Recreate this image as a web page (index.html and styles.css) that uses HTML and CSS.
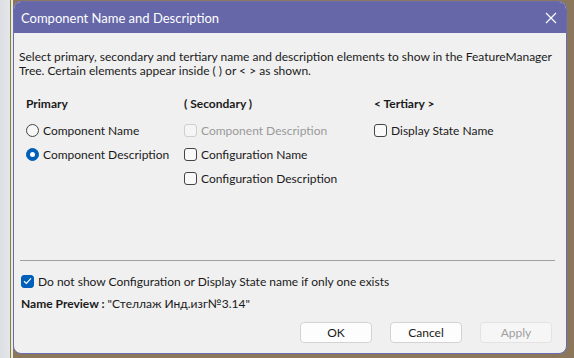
FILE: index.html
```html
<!DOCTYPE html>
<html lang="en">
<head>
  <meta charset="UTF-8">
  <title>Component Name and Description</title>
  <link rel="stylesheet" href="styles.css">
</head>
<body>
  <div class="dialog">
    <div class="titlebar">
      <span class="title">Component Name and Description</span>
      <svg class="close" width="12" height="12" viewBox="0 0 12 12">
        <path d="M1 1 L11 11 M11 1 L1 11" stroke="#fff" stroke-width="1.2" fill="none"/>
      </svg>
    </div>

    <div class="content">
      <p class="intro">Select primary, secondary and tertiary name and description elements to show in the FeatureManager Tree. Certain elements appear inside ( ) or &lt; &gt; as shown.</p>

      <div class="columns">
        <div class="col col-primary">
          <div class="col-head">Primary</div>
          <label class="opt"><span class="radio"></span>Component Name</label>
          <label class="opt"><span class="radio on"></span>Component Description</label>
        </div>
        <div class="col col-secondary">
          <div class="col-head">( Secondary )</div>
          <label class="opt disabled"><span class="check"></span>Component Description</label>
          <label class="opt"><span class="check"></span>Configuration Name</label>
          <label class="opt"><span class="check"></span>Configuration Description</label>
        </div>
        <div class="col col-tertiary">
          <div class="col-head">&lt; Tertiary &gt;</div>
          <label class="opt"><span class="check"></span>Display State Name</label>
        </div>
      </div>

      <div class="separator"></div>

      <label class="opt single"><span class="check on">
        <svg width="9" height="8" viewBox="0 0 9 8"><path d="M1 4.2 L3.4 6.4 L8 1.4" stroke="#fff" stroke-width="1.2" fill="none"/></svg>
      </span>Do not show Configuration or Display State name if only one exists</label>

      <div class="preview"><b>Name Preview :</b> "Стеллаж Инд.изг№3.14"</div>

      <div class="buttons">
        <button class="btn">OK</button>
        <button class="btn">Cancel</button>
        <button class="btn" disabled>Apply</button>
      </div>
    </div>
  </div>
</body>
</html>
```

FILE: styles.css
```css
body {
  margin: 0;
  height: 358px;
  overflow: hidden;
  font-family: 'Lato', 'Noto Sans', sans-serif;
  font-size: 12px;
  color: #1a1a1a;
  background: linear-gradient(to right, #dcdfe3 0, #e4e6e9 10px, #86862e 10px, #86862e 11px, #e8e8e8 11px, #e8e8e8 13px, #8b775c 13px);
  padding-top: 1px;
  box-sizing: border-box;
}
.dialog {
  margin-left: 13px;
  width: 554px;
  height: 353px;
  box-sizing: border-box;
  border: 1px solid #6a6cb2;
  border-radius: 8px;
  overflow: hidden;
  background: #f0f0f0;
  display: flex;
  flex-direction: column;
}
.titlebar {
  height: 31px;
  flex: none;
  background: #6567a8;
  color: #fff;
  display: flex;
  align-items: center;
  justify-content: space-between;
  padding: 0 9px 0 7px;
}
.title {
  font-size: 13px;
}
.content {
  flex: 1;
  padding: 17px 11px 0 5px;
  display: flex;
  flex-direction: column;
}
.intro {
  margin: 0;
  line-height: 14px;
}
.columns {
  display: flex;
  margin-top: 19px;
  padding-left: 7px;
}
.col-primary { width: 158px; }
.col-secondary { width: 190px; }
.col-head {
  font-weight: bold;
  height: 14px;
  line-height: 14px;
  margin-bottom: 7px;
}
.opt {
  display: flex;
  align-items: center;
  gap: 4px;
  height: 24px;
  white-space: nowrap;
}
.opt.disabled {
  color: #9a9a9a;
}
.radio {
  width: 13px;
  height: 13px;
  box-sizing: border-box;
  border-radius: 50%;
  border: 1px solid #444;
  background: #f7f7f7;
  display: inline-flex;
  align-items: center;
  justify-content: center;
}
.radio.on {
  background: #005fb8;
  border-color: #005fb8;
}
.radio.on::after {
  content: "";
  width: 5px;
  height: 5px;
  border-radius: 50%;
  background: #fff;
}
.check {
  width: 13px;
  height: 13px;
  box-sizing: border-box;
  border-radius: 3px;
  border: 1px solid #444;
  background: #f9f9f9;
  display: inline-flex;
  align-items: center;
  justify-content: center;
}
.disabled .check {
  border-color: #cfcfcf;
  background: #f5f5f5;
}
.check.on {
  background: #005fb8;
  border-color: #005fb8;
}
.separator {
  height: 1px;
  background: #a0a0a0;
  margin: 70px 0 8px 1px;
}
.single {
  padding-left: 2px;
}
.preview {
  margin-top: 0;
  padding-left: 2px;
  height: 22px;
  line-height: 22px;
}
.buttons {
  display: flex;
  justify-content: flex-end;
  gap: 18px;
  margin-top: 7px;
  padding-right: 3px;
}
.btn {
  width: 72px;
  height: 21px;
  font-family: inherit;
  font-size: 12px;
  color: #1a1a1a;
  background: #fdfdfd;
  border: 1px solid #d3d3d3;
  border-radius: 4px;
  padding: 0;
}
.btn:disabled {
  color: #a0a0a0;
  background: #f6f6f6;
  border-color: #e3e3e3;
}
```
